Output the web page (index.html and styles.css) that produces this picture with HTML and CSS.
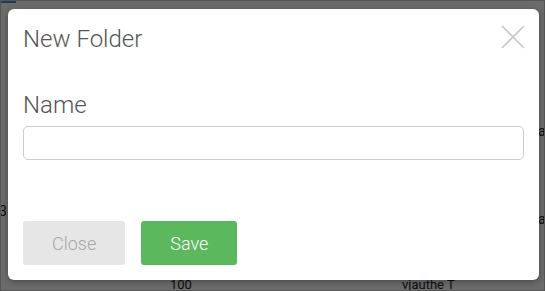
FILE: index.html
```html
<!DOCTYPE html>
<html>
<head>
    <title>New Folder</title>
    <link rel="stylesheet" href="styles.css">
</head>
<body>
    <!-- page behind the dialog -->
    <div class="page">
        <div class="page-bar"></div>
        <span class="page-text row-num">3</span>
        <span class="page-text cell-a">a</span>
        <span class="page-text cell-b">a</span>
        <span class="page-text cell-count">100</span>
        <span class="page-text cell-user">vjauthe T</span>
    </div>

    <div class="backdrop">
        <div class="modal">
            <div class="modal-header">
                <h4 class="modal-title">New Folder</h4>
                <button class="modal-close" aria-label="Close">
                    <svg width="24" height="24" viewBox="0 0 24 24">
                        <path d="M1 1 L23 23 M23 1 L1 23" stroke="#c8c8c8" stroke-width="1.6" fill="none"/>
                    </svg>
                </button>
            </div>
            <div class="modal-body">
                <label class="field-label" for="folderName">Name</label>
                <input class="field-input" id="folderName" type="text">
            </div>
            <div class="modal-footer">
                <button class="btn btn-close">Close</button>
                <button class="btn btn-save">Save</button>
            </div>
        </div>
    </div>
</body>
</html>
```

FILE: styles.css
```css
body {
    margin: 0;
    padding: 0;
    width: 545px;
    height: 291px;
    overflow: hidden;
    font-family: Roboto, "Liberation Sans", sans-serif;
    background-color: #fff;
    position: relative;
}

.page {
    position: absolute;
    top: 0;
    left: 0;
    width: 100%;
    height: 100%;
}

.page-bar {
    width: 16px;
    height: 3px;
    background-color: #4a8ad0;
}

.page-text {
    position: absolute;
    font-size: 14px;
    line-height: 14px;
    color: #222;
}

.row-num { left: -1px; top: 204px; }
.cell-a { left: 538px; top: 124px; }
.cell-b { left: 538px; top: 212px; }
.cell-count { left: 170px; top: 279px; font-size: 13px; line-height: 12px; }
.cell-user { left: 402px; top: 279px; font-size: 13px; line-height: 12px; }

.backdrop {
    position: absolute;
    top: 0;
    left: 0;
    width: 100%;
    height: 100%;
    background-color: rgba(0, 0, 0, 0.58);
    border: 1px solid #555;
    box-sizing: border-box;
    padding: 8px 0 0 7px;
}

.modal {
    width: 531px;
    height: 271px;
    box-sizing: border-box;
    background-color: #fff;
    border-radius: 6px;
    box-shadow: 0 2px 6px rgba(0, 0, 0, 0.3);
    display: flex;
    flex-direction: column;
}

.modal-header {
    display: flex;
    justify-content: space-between;
    align-items: flex-start;
    padding: 15px 15px 0 15px;
}

.modal-title {
    margin: 0;
    font-size: 24px;
    font-weight: 300;
    color: #555;
    line-height: 30px;
}

.modal-close {
    border: none;
    background: none;
    padding: 0;
    margin: 1px -1px 0 0;
    width: 24px;
    height: 24px;
    cursor: pointer;
}

.modal-body {
    display: flex;
    flex-direction: column;
    padding: 36px 15px 0 15px;
}

.field-label {
    font-size: 24px;
    font-weight: 300;
    color: #555;
    line-height: 30px;
    margin-bottom: 6px;
}

.field-input {
    height: 34px;
    box-sizing: border-box;
    border: 1px solid #ccc;
    border-radius: 5px;
    font-size: 16px;
    padding: 0 10px;
}

.modal-footer {
    margin-top: auto;
    display: flex;
    gap: 16px;
    padding: 0 15px 15px 15px;
}

.btn {
    height: 44px;
    padding: 0 29px;
    border: none;
    border-radius: 3px;
    font-family: Roboto, "Liberation Sans", sans-serif;
    font-size: 18px;
    font-weight: 300;
    cursor: pointer;
}

.btn-close {
    background-color: #e6e6e6;
    color: #a6a6a6;
}

.btn-save {
    background-color: #5cb85c;
    color: #fff;
}
```
